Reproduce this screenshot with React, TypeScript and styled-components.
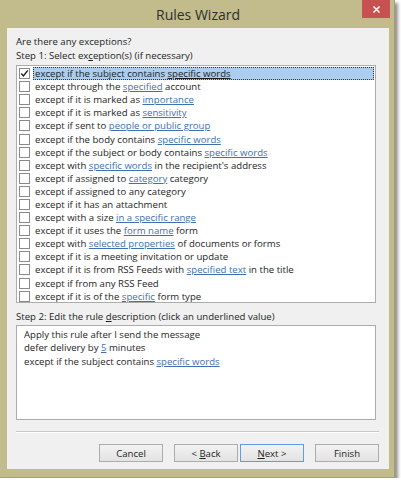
import React from 'react';
import styled, { createGlobalStyle } from 'styled-components';

const GlobalStyle = createGlobalStyle`
  html, body {
    margin: 0;
    padding: 0;
    background: #ffffff;
  }
  body {
    font-family: "Open Sans", "Noto Sans", "Liberation Sans", sans-serif;
    font-size: 9.6px;
    color: #1e1e1e;
  }
`;

// [bracketed] parts of a rule are its editable values, drawn as links
const exceptions = [
  'except if the subject contains [specific words]',
  'except through the [specified] account',
  'except if it is marked as [importance]',
  'except if it is marked as [sensitivity]',
  'except if sent to [people or public group]',
  'except if the body contains [specific words]',
  'except if the subject or body contains [specific words]',
  "except with [specific words] in the recipient's address",
  'except if assigned to [category] category',
  'except if assigned to any category',
  'except if it has an attachment',
  'except with a size [in a specific range]',
  'except if it uses the [form name] form',
  'except with [selected properties] of documents or forms',
  'except if it is a meeting invitation or update',
  'except if it is from RSS Feeds with [specified text] in the title',
  'except if from any RSS Feed',
  'except if it is of the [specific] form type',
];

const RuleText: React.FC<{ text: string; selected?: boolean }> = ({ text, selected }) => (
  <>
    {text.split(/(\[[^\]]+\])/).map((part, i) =>
      part.startsWith('[') ? (
        <Value key={i} $selected={selected}>
          {part.slice(1, -1)}
        </Value>
      ) : (
        <span key={i}>{part}</span>
      )
    )}
  </>
);

const Check = () => (
  <svg width="9" height="9" viewBox="0 0 9 9">
    <path d="M1.2 4.6 L3.4 6.9 L7.8 1.4" fill="none" stroke="#222" strokeWidth="1.5" />
  </svg>
);

const CloseIcon = () => (
  <svg width="9" height="9" viewBox="0 0 9 9">
    <path d="M1.5 1.5 L7.5 7.5 M7.5 1.5 L1.5 7.5" stroke="#fff" strokeWidth="1.6" />
  </svg>
);

export default function App() {
  return (
    <>
      <GlobalStyle />
      <Window>
        <TitleBar>
          <span />
          <Title>Rules Wizard</Title>
          <CloseButton>
            <CloseIcon />
          </CloseButton>
        </TitleBar>

        <Client>
          <Label>Are there any exceptions?</Label>
          <Label>
            Step 1: Select ex<u>c</u>eption(s) (if necessary)
          </Label>

          <ListBox>
            {exceptions.map((text, i) => (
              <Row key={i}>
                <Checkbox>{i === 0 && <Check />}</Checkbox>
                <RowLabel $selected={i === 0}>
                  <RuleText text={text} selected={i === 0} />
                </RowLabel>
              </Row>
            ))}
          </ListBox>

          <StepLabel>
            Step 2: Edit the rule <u>d</u>escription (click an underlined value)
          </StepLabel>

          <Description>
            <div>Apply this rule after I send the message</div>
            <div>
              defer delivery by <Value>5</Value> minutes
            </div>
            <div>
              except if the subject contains <Value>specific words</Value>
            </div>
          </Description>

          <Separator />

          <Buttons>
            <Button>
              <span>Cancel</span>
            </Button>
            <ButtonPair>
              <Button>
                <span>
                  &lt; <u>B</u>ack
                </span>
              </Button>
              <Button $default>
                <span>
                  <u>N</u>ext &gt;
                </span>
              </Button>
            </ButtonPair>
            <Button>
              <span>Finish</span>
            </Button>
          </Buttons>
        </Client>
      </Window>
    </>
  );
}

const Window = styled.div`
  width: 395px;
  height: 478px;
  box-sizing: border-box;
  display: flex;
  flex-direction: column;
  padding: 0 5px 8px 7px;
  background: #c2bb8b;
  border-right: 1px solid #a49e70;
  border-bottom: 1px solid #a49e70;
  box-shadow: 3px 3px 3px rgba(60, 60, 60, 0.55);
`;

const TitleBar = styled.div`
  height: 29px;
  display: grid;
  grid-template-columns: 1fr auto 1fr;
  align-items: start;
`;

const Title = styled.div`
  padding-top: 5px;
  font-size: 14px;
  color: #2f2f2f;
`;

const CloseButton = styled.div`
  justify-self: end;
  width: 28px;
  height: 18px;
  margin-right: -1px;
  display: flex;
  align-items: center;
  justify-content: center;
  background: #c75050;
`;

const Client = styled.div`
  flex: 1;
  display: flex;
  flex-direction: column;
  padding: 7px 10px 7px 9px;
  background: #f0f0f0;
`;

const Label = styled.div`
  line-height: 14px;
  white-space: nowrap;
`;

const StepLabel = styled(Label)`
  margin-top: 7px;
`;

const ListBox = styled.div`
  width: 360px;
  height: 238px;
  box-sizing: border-box;
  margin-top: 2px;
  padding-top: 1px;
  background: #ffffff;
  border: 1px solid #acacac;
  overflow: hidden;
`;

const Row = styled.div`
  height: 13.1px;
  display: flex;
  align-items: center;
  white-space: nowrap;
`;

const Checkbox = styled.div`
  width: 11px;
  height: 11px;
  box-sizing: border-box;
  margin: 0 3px 0 2px;
  flex: none;
  display: flex;
  align-items: center;
  justify-content: center;
  background: #ffffff;
  border: 1px solid #8a8a8a;
`;

const RowLabel = styled.div<{ $selected?: boolean }>`
  flex: 1;
  height: 13px;
  line-height: 11px;
  box-sizing: border-box;
  padding-left: 1px;
  margin-right: 1px;
  border: 1px dotted ${(p) => (p.$selected ? '#333' : 'transparent')};
  background: ${(p) => (p.$selected ? '#aacdf0' : 'transparent')};
`;

const Value = styled.span<{ $selected?: boolean }>`
  color: ${(p) => (p.$selected ? '#1e1e1e' : '#3f70b0')};
  text-decoration: underline;
  text-underline-offset: 1px;
`;

const Description = styled.div`
  width: 360px;
  height: 95px;
  box-sizing: border-box;
  margin-top: 1px;
  padding: 2px 7px;
  background: #ffffff;
  border: 1px solid #acacac;
  line-height: 13.3px;
`;

const Separator = styled.div`
  margin-top: 11px;
  height: 1px;
  background: #c8c8c8;
  border-bottom: 1px solid #ffffff;
`;

const Buttons = styled.div`
  margin-top: 11px;
  display: flex;
  justify-content: flex-end;
  gap: 11px;
`;

const ButtonPair = styled.div`
  display: flex;
  gap: 2px;
`;

const Button = styled.div<{ $default?: boolean }>`
  width: 64px;
  height: 18px;
  box-sizing: border-box;
  display: flex;
  align-items: center;
  justify-content: center;
  border: 1px solid ${(p) => (p.$default ? '#5b9fe2' : '#acacac')};
  background: linear-gradient(#f2f2f2, #e3e3e3);
  white-space: nowrap;
`;
